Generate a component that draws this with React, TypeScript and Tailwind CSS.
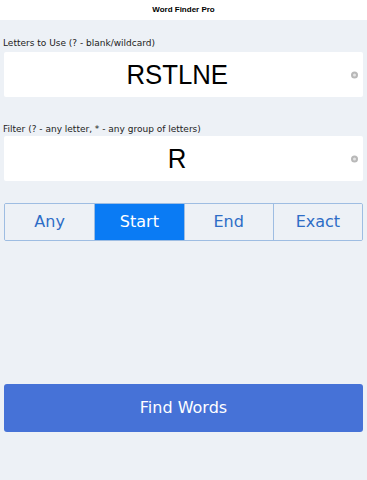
const MODES = ["Any", "Start", "End", "Exact"];

function ClearDot() {
  return (
    <span className="absolute right-[5px] top-1/2 -translate-y-1/2 h-[7px] w-[7px] rounded-full bg-[#b8b8b8] flex items-center justify-center">
      <span className="h-[3px] w-[3px] rounded-full bg-[#e4e4e4]" />
    </span>
  );
}

function Field({ label, value, gap }: { label: string; value: string; gap: string }) {
  return (
    <div>
      <div className="px-[3px] text-[9px] leading-[11px] text-[#222] font-['DejaVu_Sans',sans-serif]">
        {label}
      </div>
      <div
        className={
          gap +
          " relative mx-[4px] h-[45px] rounded-[2px] bg-white flex items-center justify-center pr-[12px]"
        }
      >
        <span className="text-[28px] leading-none text-black font-['Liberation_Sans',Arial,sans-serif] scale-x-[0.92]">
          {value}
        </span>
        <ClearDot />
      </div>
    </div>
  );
}

export default function App() {
  const active = "Start";
  return (
    <div className="w-[367px] h-[480px] bg-[#edf1f6] flex flex-col overflow-hidden">
      <div className="h-[20px] bg-white flex items-center justify-center">
        <span className="text-[8px] font-bold text-black font-['Liberation_Sans',Arial,sans-serif]">
          Word Finder Pro
        </span>
      </div>

      <div className="pt-[18px]">
        <Field label="Letters to Use (? - blank/wildcard)" value="RSTLNE" gap="mt-[3px]" />
      </div>

      <div className="pt-[27px]">
        <Field
          label="Filter (? - any letter, * - any group of letters)"
          value="R"
          gap="mt-[1px]"
        />
      </div>

      <div className="mx-[4px] mt-[22px] h-[38px] grid grid-cols-4 border border-[#9ebde2] rounded-[2px] overflow-hidden font-['DejaVu_Sans',sans-serif]">
        {MODES.map((m, i) => (
          <div
            key={m}
            className={
              (m === active
                ? "bg-[#0a7bf4] text-white"
                : "bg-[#edf1f6] text-[#2d6dc6]") +
              (i > 0 ? " border-l border-[#9ebde2]" : "") +
              " flex items-center justify-center text-[16px]"
            }
          >
            {m}
          </div>
        ))}
      </div>

      <button
        type="button"
        className="mx-[4px] mt-[143px] h-[48px] rounded-[3px] bg-[#4672d7] text-white text-[16px] font-['DejaVu_Sans',sans-serif]"
      >
        Find Words
      </button>
    </div>
  );
}
